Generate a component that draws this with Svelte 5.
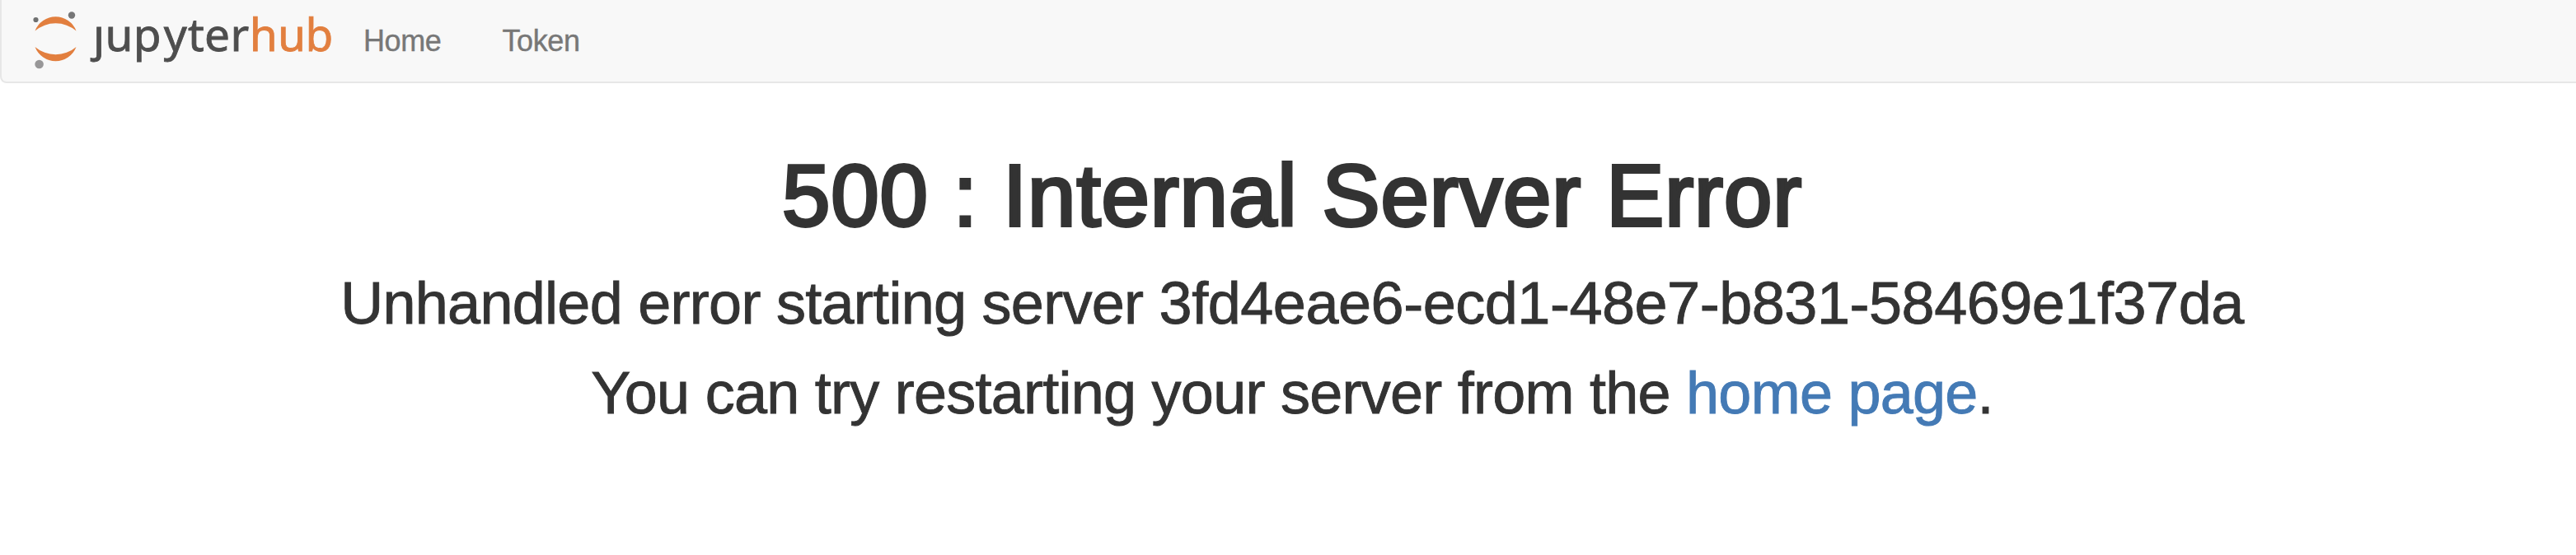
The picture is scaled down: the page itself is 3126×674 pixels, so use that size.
<script>
  const links = ['Home', 'Token'];
</script>

<nav class="navbar">
  <a class="brand" href="#home" aria-label="jupyterhub">
    <svg width="380" height="98" viewBox="38 0 380 98">
      <g fill="#e27f3f">
        <path d="M42.5 37.5A26.8 26.8 0 0 1 92.5 37.5A38.5 38.5 0 0 0 42.5 37.5Z" />
        <path d="M42.5 57A26.8 26.8 0 0 0 92.5 57A38.5 38.5 0 0 1 42.5 57Z" />
      </g>
      <circle cx="43.5" cy="24" r="3.1" fill="#6f7070" />
      <circle cx="87" cy="18.5" r="4.2" fill="#767677" />
      <circle cx="47.6" cy="78" r="5.3" fill="#989798" />
      <text class="word" y="62" x="113 127.5 161.8 198.7 228 248 279.5" fill="#4e4e4e" stroke="#4e4e4e">ȷupyter</text>
      <text class="word" y="62" x="302.8 337 370.6" fill="#e27f3f" stroke="#e27f3f">hub</text>
    </svg>
  </a>
  <div class="links">
    {#each links as link}
      <a href="#{link}">{link}</a>
    {/each}
  </div>
</nav>

<main class="error">
  <h1>500 : Internal Server Error</h1>
  <p class="detail">Unhandled error starting server <span class="id">3fd4eae6-ecd1-48e7-b831-58469e1f37da</span></p>
  <p class="hint">You can try restarting your server from the <a href="#home">home page</a>.</p>
</main>

<style>
  :global(body) {
    background: #fff;
    font-family: "Liberation Sans", Arial, sans-serif;
    overflow: hidden;
  }
  .navbar {
    box-sizing: border-box;
    height: 101px;
    display: flex;
    align-items: flex-start;
    padding-left: 36px;
    background: #f8f8f8;
    border: solid #e7e7e7;
    border-width: 0 0 2px 2px;
    border-radius: 0 0 0 8px;
  }
  .brand, .brand svg { display: block; }
  .word {
    font-family: "Noto Sans", sans-serif;
    font-size: 55px;
    stroke-width: 0.8px;
  }
  .links {
    display: flex;
    gap: 74px;
    margin-left: 23px;
    padding-top: 30px;
  }
  .links a {
    color: #777;
    font-size: 36px;
    line-height: 40px;
    letter-spacing: -0.4px;
    text-decoration: none;
    -webkit-text-stroke: 0.4px #777;
  }
  .error {
    color: #333;
    text-align: center;
    padding: 77px 0 0 10px;
    white-space: nowrap;
  }
  h1 {
    margin: 0;
    font-size: 105px;
    line-height: 120px;
    font-weight: 400;
    letter-spacing: 0.9px;
    -webkit-text-stroke: 3.8px #333;
  }
  p {
    margin: 0;
    font-size: 72px;
    line-height: 109px;
    -webkit-text-stroke: 0.9px currentColor;
  }
  .detail { margin-top: 16px; letter-spacing: -0.72px; }
  .id { letter-spacing: -0.47px; }
  .hint { letter-spacing: -0.75px; }
  .hint a { color: #447ab5; text-decoration: none; }
</style>
